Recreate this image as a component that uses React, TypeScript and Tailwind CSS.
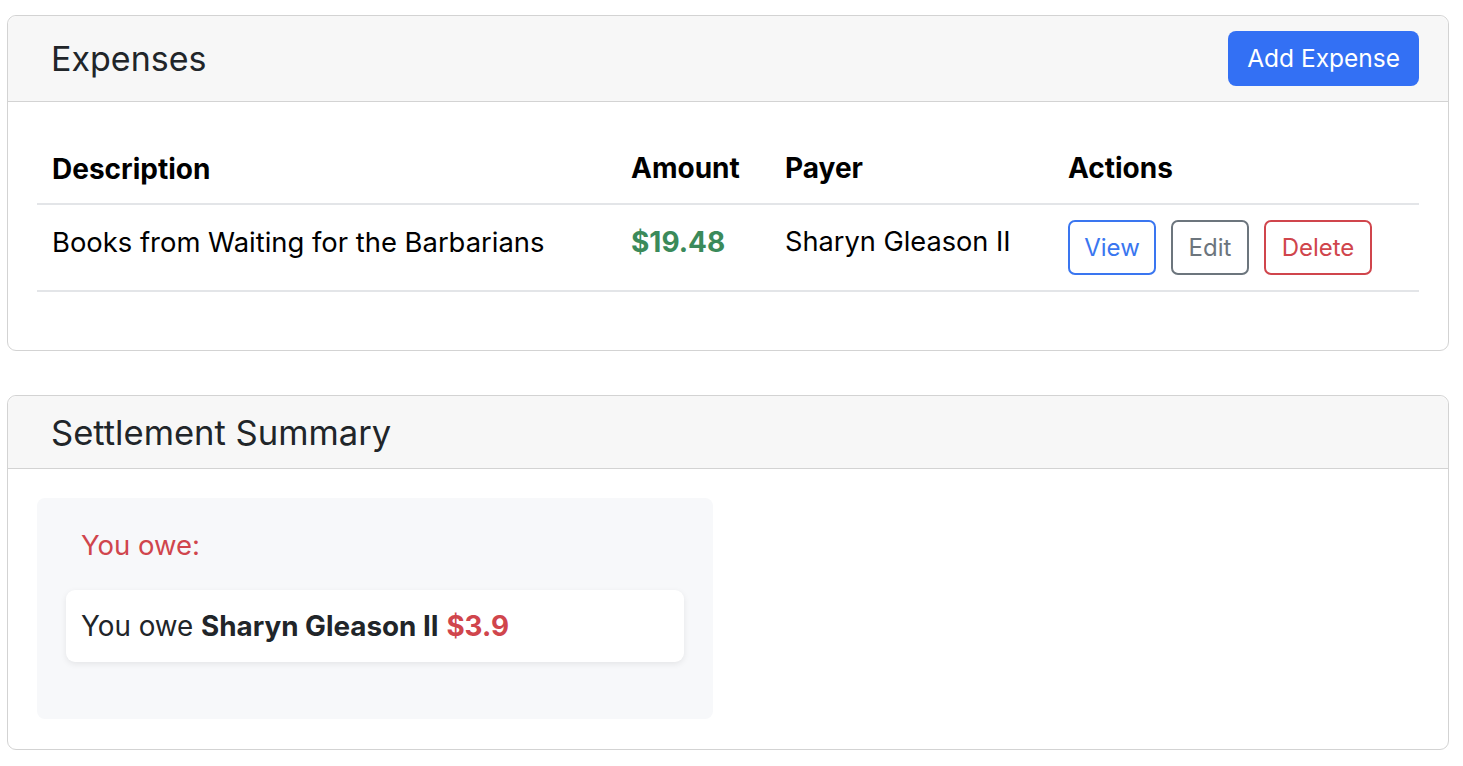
import React from "react";

export default function App() {
  const font = { fontFamily: "Inter, 'Noto Sans', sans-serif" };
  return (
    <div className="min-h-[766px] bg-white pl-[7px] pr-[14px] pt-[15px] text-[#212529]" style={font}>
      {/* Expenses card */}
      <div className="rounded-[9px] border border-[#d3d3d3] bg-white">
        <div className="flex items-center justify-between rounded-t-[9px] border-b border-[#d3d3d3] bg-[#f7f7f7] py-[15px] pl-[43px] pr-[29px]">
          <h4 className="text-[34px] leading-[40px] font-normal text-[#212529]">Expenses</h4>
          <button className="h-[55px] rounded-[8px] bg-[#3370f4] px-[19px] text-[24.5px] text-white">
            Add Expense
          </button>
        </div>
        <div className="px-[29px] pt-[30px] pb-[58px]">
          <table className="w-full border-collapse text-black">
            <thead>
              <tr className="border-b-2 border-[#e3e5e8]">
                <th className="w-[579px] px-[15px] pt-[17px] pb-[14px] text-left text-[28px] leading-[40px] font-bold">Description</th>
                <th className="w-[154px] px-[15px] text-left text-[28px] leading-[40px] font-bold">Amount</th>
                <th className="w-[283px] px-[15px] text-left text-[28px] leading-[40px] font-bold">Payer</th>
                <th className="px-[15px] text-left text-[28px] leading-[40px] font-bold">Actions</th>
              </tr>
            </thead>
            <tbody>
              <tr className="border-b-2 border-[#e3e5e8]">
                <td className="px-[15px] pt-[15px] pb-[15px] align-top text-[27.4px] leading-[44px]">Books from Waiting for the Barbarians</td>
                <td className="px-[15px] pt-[15px] align-top text-[28px] leading-[44px] font-bold text-[#3b8a5a]">$19.48</td>
                <td className="px-[15px] pt-[15px] align-top text-[27.2px] leading-[44px]">Sharyn Gleason II</td>
                <td className="px-[15px] pt-[15px] pb-[15px] align-top">
                  <div className="flex gap-[15px]">
                    <button className="h-[55px] w-[88px] rounded-[7px] border-2 border-[#3a76f0] text-[24px] text-[#3a76f0]">View</button>
                    <button className="h-[55px] w-[78px] rounded-[7px] border-2 border-[#6c757d] text-[24px] text-[#6c757d]">Edit</button>
                    <button className="h-[55px] w-[108px] rounded-[7px] border-2 border-[#d0454c] text-[24px] text-[#d0454c]">Delete</button>
                  </div>
                </td>
              </tr>
            </tbody>
          </table>
        </div>
      </div>

      {/* Settlement card */}
      <div className="mt-[44px] rounded-[9px] border border-[#d3d3d3] bg-white">
        <div className="rounded-t-[9px] border-b border-[#d3d3d3] bg-[#f7f7f7] py-[16px] pl-[43px]">
          <h4 className="text-[34.6px] leading-[40px] font-normal text-[#212529]">Settlement Summary</h4>
        </div>
        <div className="px-[29px] pt-[29px] pb-[30px]">
          <div className="w-[676px] rounded-[8px] bg-[#f7f8fa] px-[29px] pt-[31px] pb-[57px]">
            <h5 className="px-[15px] text-[27.5px] leading-[32px] text-[#d0454c]">You owe:</h5>
            <div className="mt-[29px] rounded-[9px] bg-white px-[15px] py-[16px] text-[27.8px] leading-[40px] text-[#212529] shadow-[0_2px_6px_rgba(0,0,0,0.08)]">
              You owe <span className="font-bold">Sharyn Gleason II</span>{" "}
              <span className="font-bold text-[#d0454c]">$3.9</span>
            </div>
          </div>
        </div>
      </div>
    </div>
  );
}
